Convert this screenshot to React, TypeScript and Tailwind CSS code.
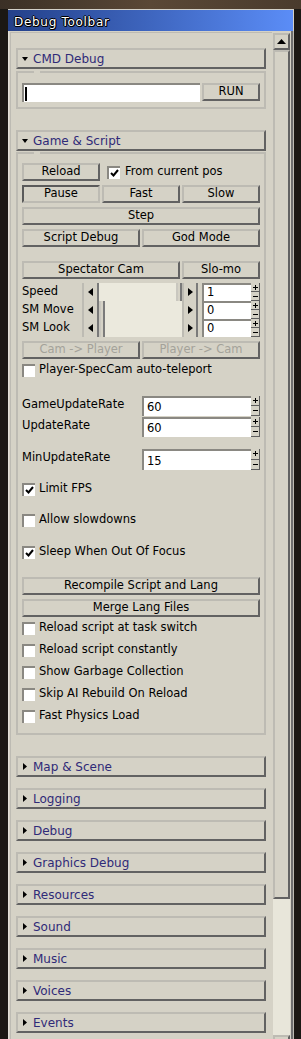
import React from 'react'

const FONT = "font-['DejaVu_Sans',sans-serif]"
const RAISED = 'border-2 border-t-[#bdbbb3] border-l-[#bdbbb3] border-r-[#626262] border-b-[#626262]'
const PRESSED = 'border-2 border-t-[#5a5a5a] border-l-[#5a5a5a] border-r-[#bdbbb3] border-b-[#bdbbb3]'
const SUNKEN = 'border-t-2 border-l-2 border-t-[#8a8882] border-l-[#8a8882]'

function Btn({ label, className = '', pressed = false, disabled = false }: {
  label: string; className?: string; pressed?: boolean; disabled?: boolean
}) {
  return (
    <div
      className={`h-[18px] flex items-center justify-center text-[11.5px] leading-none ${pressed ? PRESSED : RAISED} ${disabled ? 'text-[#a4a29a]' : 'text-black'} ${className}`}
    >
      {label}
    </div>
  )
}

function Header({ title, open = false, className = '' }: { title: string; open?: boolean; className?: string }) {
  return (
    <div className={`h-[21px] flex items-center ${RAISED} ${className}`}>
      <div className="w-[11px] ml-[4px] flex items-center">
        {open ? (
          <svg width="6" height="4" viewBox="0 0 6 4"><path d="M0 0h6L3 4z" fill="#000" /></svg>
        ) : (
          <svg width="4" height="7" viewBox="0 0 4 7" className="ml-[1px]"><path d="M0 0l4 3.5L0 7z" fill="#000" /></svg>
        )}
      </div>
      <span className="text-[12px] leading-none text-[#2f2a78]">{title}</span>
    </div>
  )
}

function Box({ children, className = '' }: { children: React.ReactNode; className?: string }) {
  return (
    <div className={`relative border-2 border-[#bdbbb3] px-[4px] ${className}`}>
      <span className="absolute -top-[2px] left-[16px] w-[6px] h-[2px] bg-[#d5d2c6]" />
      {children}
    </div>
  )
}

function Check({ checked = false }: { checked?: boolean }) {
  return (
    <div className={`w-[13px] h-[13px] shrink-0 bg-white flex items-center justify-center ${SUNKEN}`}>
      {checked && (
        <svg width="9" height="8" viewBox="0 0 9 8">
          <path d="M1 4l2.5 2.5L8 1" stroke="#000" strokeWidth="2" fill="none" />
        </svg>
      )}
    </div>
  )
}

function CheckRow({ label, checked = false, className = '' }: { label: string; checked?: boolean; className?: string }) {
  return (
    <div className={`h-[14px] flex items-center gap-[4px] text-[11.5px] text-black ${className}`}>
      <Check checked={checked} />
      <span className="leading-none">{label}</span>
    </div>
  )
}

function Spinner() {
  return (
    <div className="w-[9px] flex flex-col">
      <div className="flex-1 flex items-center justify-center border-r border-b border-[#5e5e5e]">
        <svg width="5" height="5" viewBox="0 0 5 5"><path d="M0 2.5h5M2.5 0v5" stroke="#000" strokeWidth="1" /></svg>
      </div>
      <div className="flex-1 flex items-center justify-center border-r border-b border-[#5e5e5e]">
        <svg width="5" height="1" viewBox="0 0 5 1"><path d="M0 0.5h5" stroke="#000" strokeWidth="1" /></svg>
      </div>
    </div>
  )
}

function Arrow({ dir, className = '' }: { dir: 'left' | 'right'; className?: string }) {
  return (
    <div className={`flex items-center justify-center border-l-2 border-r-2 border-l-[#bdbbb3] border-r-[#7a7a7a] ${className}`}>
      <svg width="5" height="8" viewBox="0 0 5 8">
        <path d={dir === 'left' ? 'M5 0v8L0 4z' : 'M0 0v8l5-4z'} fill="#000" />
      </svg>
    </div>
  )
}

function SliderRow({ label, value, thumb }: { label: string; value: string; thumb: 'start' | 'end' }) {
  return (
    <div className="h-[18px] flex items-stretch">
      <div className="w-[60px] text-[11.5px] text-black leading-none flex items-center">{label}</div>
      <Arrow dir="left" className="w-[17px]" />
      <div className={`w-[83px] bg-[#ebe9dd] flex ${thumb === 'end' ? 'justify-end' : 'justify-start'}`}>
        <div className="w-[6px] border-l-2 border-r-2 border-l-[#c9c7bf] border-r-[#7a7a7a] bg-[#d5d2c6]" />
      </div>
      <Arrow dir="right" className="w-[16px]" />
      <div className="w-[4px]" />
      <div className={`w-[49px] bg-white flex items-center pl-[3px] text-[11.5px] text-black leading-none ${SUNKEN}`}>{value}</div>
      <Spinner />
    </div>
  )
}

function NumRow({ label, value, className = '', h = 'h-[20px]' }: { label: string; value: string; className?: string; h?: string }) {
  return (
    <div className={`flex ${h} ${className}`}>
      <div className="w-[120px] text-[11.5px] text-black leading-none pt-[3px]">{label}</div>
      <div className={`w-[109px] bg-white flex items-center pl-[3px] pt-[2px] text-[11.5px] text-black leading-none ${SUNKEN}`}>{value}</div>
      <Spinner />
    </div>
  )
}

export default function App() {
  const closed = ['Map & Scene', 'Logging', 'Debug', 'Graphics Debug', 'Resources', 'Sound', 'Music', 'Voices', 'Events']

  return (
    <div className={`w-[301px] h-[1039px] overflow-hidden bg-[#1b1814] ${FONT}`}>
      <div className="h-[9px] bg-gradient-to-r from-[#3b3026] via-[#5a4836] to-[#4a3b2d]" />
      <div className="ml-[8px] w-[286px]">
        {/* title bar */}
        <div className="h-[22px] bg-gradient-to-r from-[#24418a] to-[#5b8df7] border-t border-r border-[#d2d0c8] pl-[6px] pt-[2px] flex items-center">
          <span className="text-[12px] leading-none text-white tracking-[0.7px] [text-shadow:1px_0_0_#000,-1px_0_0_#000,0_1px_0_#000,0_-1px_0_#000,1px_1px_0_#000]">
            Debug Toolbar
          </span>
        </div>

        {/* body */}
        <div className="flex bg-[#d5d2c6] h-[1010px]">
          <div className="w-[2px] border-l border-[#e2e0d8]" />
          <div className="w-[262px] border-l border-t border-[#bdbbb3] mt-[1px] pl-[5px] pt-[15px] flex flex-col">
            <div className="w-[250px]">
              <Header title="CMD Debug" open />
              <Box className="mt-[2px] pt-[10px] pb-[5px]">
                <div className="flex h-[19px]">
                  <div className={`w-[178px] bg-white flex items-center pl-[1px] ${SUNKEN}`}>
                    <div className="w-[2px] h-[14px] bg-black" />
                  </div>
                  <Btn label="RUN" className="ml-[2px] w-[58px] h-[18px]" />
                </div>
              </Box>

              <Header title="Game & Script" open className="mt-[21px]" />
              <Box className="mt-[1px] pt-[9px] pb-[10px]">
                <div className="flex items-center">
                  <Btn label="Reload" className="w-[78px]" />
                  <CheckRow label="From current pos" checked className="ml-[7px] gap-[5px]" />
                </div>
                <div className="mt-[4px] grid grid-cols-3 gap-[2px]">
                  <Btn label="Pause" pressed />
                  <Btn label="Fast" />
                  <Btn label="Slow" />
                </div>
                <Btn label="Step" className="mt-[4px]" />
                <div className="mt-[4px] grid grid-cols-2 gap-[2px]">
                  <Btn label="Script Debug" />
                  <Btn label="God Mode" />
                </div>
                <div className="mt-[14px] flex gap-[2px]">
                  <Btn label="Spectator Cam" className="w-[158px]" />
                  <Btn label="Slo-mo" className="flex-1" />
                </div>
                <div className="mt-[4px]">
                  <SliderRow label="Speed" value="1" thumb="end" />
                  <SliderRow label="SM Move" value="0" thumb="start" />
                  <SliderRow label="SM Look" value="0" thumb="start" />
                </div>
                <div className="mt-[4px] grid grid-cols-2 gap-[2px]">
                  <Btn label="Cam -> Player" disabled />
                  <Btn label="Player -> Cam" disabled />
                </div>
                <CheckRow label="Player-SpecCam auto-teleport" className="mt-[4px]" />

                <NumRow label="GameUpdateRate" value="60" className="mt-[19px]" />
                <NumRow label="UpdateRate" value="60" className="mt-[1px]" />
                <NumRow label="MinUpdateRate" value="15" className="mt-[12px]" h="h-[21px]" />

                <CheckRow label="Limit FPS" checked className="mt-[12px]" />
                <CheckRow label="Allow slowdowns" className="mt-[17px]" />
                <CheckRow label="Sleep When Out Of Focus" checked className="mt-[18px]" />

                <Btn label="Recompile Script and Lang" className="mt-[18px]" />
                <Btn label="Merge Lang Files" className="mt-[4px]" />

                <CheckRow label="Reload script at task switch" className="mt-[4px]" />
                <CheckRow label="Reload script constantly" className="mt-[8px]" />
                <CheckRow label="Show Garbage Collection" className="mt-[8px]" />
                <CheckRow label="Skip AI Rebuild On Reload" className="mt-[8px]" />
                <CheckRow label="Fast Physics Load" className="mt-[8px]" />
              </Box>

              <div className="mt-[21px] flex flex-col gap-[11px]">
                {closed.map((t) => (
                  <Header key={t} title={t} />
                ))}
              </div>
            </div>
          </div>
          <div className="w-[1px]" />

          {/* scrollbar */}
          <div className="w-[17px] mt-[2px] flex flex-col">
            <div className={`h-[17px] flex items-center justify-center ${RAISED}`}>
              <svg width="9" height="5" viewBox="0 0 9 5"><path d="M0 5h9L4.5 0z" fill="#000" /></svg>
            </div>
            <div className={`h-[849px] ${RAISED}`} />
            <div className="h-[136px] bg-[#e8e6da]" />
            <div className={`flex-1 ${RAISED}`} />
          </div>

          <div className="w-[4px] flex">
            <div className="w-[1px]" />
            <div className="w-[2px] bg-[#6e6e6e]" />
            <div className="w-[1px] bg-[#bdbbb3]" />
          </div>
        </div>
      </div>
    </div>
  )
}
